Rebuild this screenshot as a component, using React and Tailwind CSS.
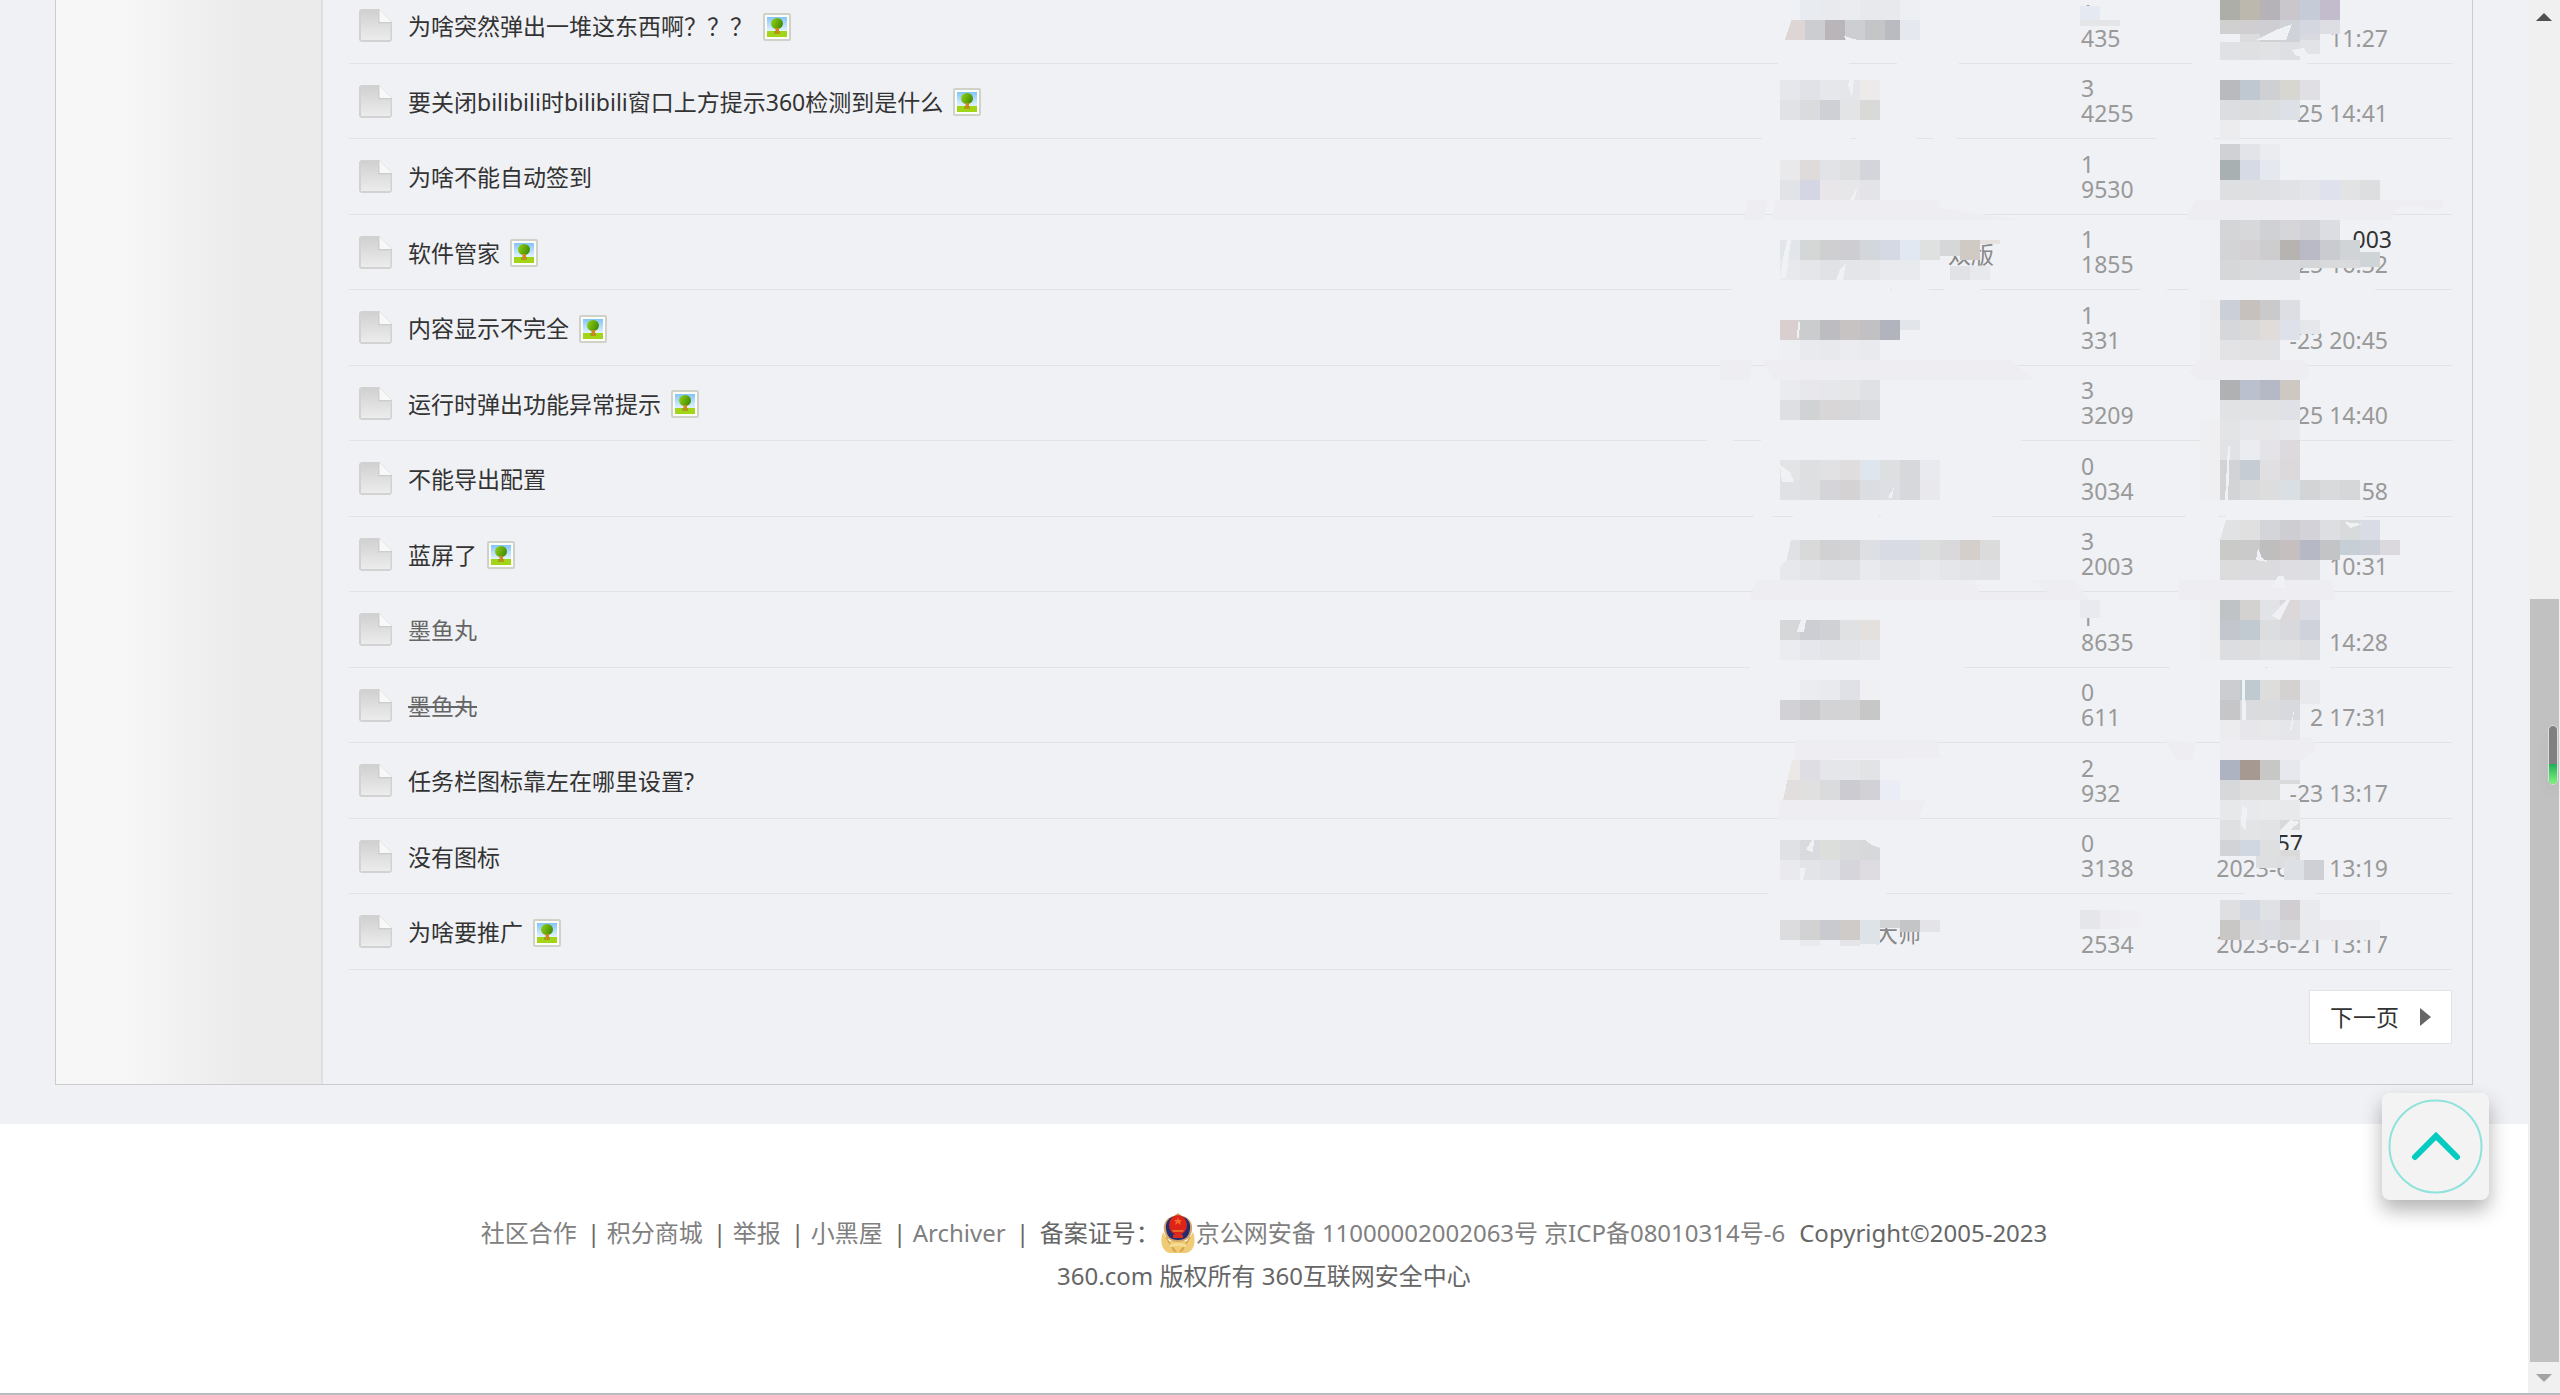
import React from "react";

const THREADS = [
  { title: "为啥突然弹出一堆这东西啊？？？", image: true, replies: "1", views: "435", date: "11:27" },
  { title: "要关闭bilibili时bilibili窗口上方提示360检测到是什么", image: true, replies: "3", views: "4255", date: "25 14:41" },
  { title: "为啥不能自动签到", replies: "1", views: "9530", date: "" },
  { title: "软件管家", image: true, author: "双版", authorWidth: "w-[214px]", replies: "1", views: "1855", name: "003", nameWidth: "w-[174px]", date: "25 16:32" },
  { title: "内容显示不完全", image: true, replies: "1", views: "331", date: "-23 20:45" },
  { title: "运行时弹出功能异常提示", image: true, replies: "3", views: "3209", date: "25 14:40" },
  { title: "不能导出配置", replies: "0", views: "3034", date: "58" },
  { title: "蓝屏了", image: true, replies: "3", views: "2003", date: "10:31" },
  { title: "墨鱼丸", visited: true, replies: "1", views: "8635", date: "14:28" },
  { title: "墨鱼丸", visited: true, struck: true, replies: "0", views: "611", date: "2 17:31" },
  { title: "任务栏图标靠左在哪里设置?", replies: "2", views: "932", date: "-23 13:17" },
  { title: "没有图标", replies: "0", views: "3138", name: "57", nameWidth: "w-[85px]", date: "2023-6-21 13:19" },
  { title: "为啥要推广", image: true, author: "大师", authorWidth: "w-[141px]", replies: "", views: "2534", date: "2023-6-21 13:17" },
];

// pieces of row line that are wiped out: [y, from, to]
const GAPS = [
  [64, 1778, 1849], [64, 1897, 1959], [64, 2192, 2307],
  [139, 1762, 1850], [139, 1856, 1917], [139, 1934, 1957], [139, 2156, 2214],
  [290, 1732, 1890], [290, 1892, 1929], [290, 1945, 1981], [290, 2141, 2167], [290, 2189, 2375],
  [441, 1707, 1733], [441, 1761, 2021],
  [517, 1754, 1773], [517, 1793, 1878], [517, 1881, 1992], [517, 2186, 2218], [517, 2226, 2365],
  [667, 1750, 1965], [667, 2170, 2265], [667, 2268, 2330],
  [894, 1768, 1886], [894, 2245, 2315],
];

// pale smears between the rows
const SMEARS = [
  "1747,200 1768,200 1764,220 1744,220",
  "1776,200 1938,200 1941,208 1968,212 2020,220 1772,220",
  "2195,200 2444,200 2440,209 2428,209 2424,206 2398,206 2392,220 2185,220",
  "1720,360 1753,360 1750,380 1720,380",
  "1763,360 2011,360 2034,380 1772,380",
  "2198,360 2305,360 2310,374 2304,380 2196,380 2190,372",
  "1756,580 1975,580 1979,592 2048,592 2030,580 2074,580 2090,600 1750,600",
  "2178,580 2331,580 2336,600 2178,600",
  "1796,740 1937,740 1940,758 1794,760",
  "2165,740 2196,742 2192,760 2176,760",
  "2220,740 2312,737 2316,750 2300,760 2220,760",
  "1780,800 1926,800 1918,820 1778,820",
];

// mosaic bands: [x, y, height, colours of 20px cells]
const MOSAIC = [
  [1800, 0, 20, "e8ebf0 e9eaee ebecf0 e7e9ed e7e9ed eeeff3"],
  [1785, 20, 20, "ded6d4 cccdd1 b9b5b9 cdced1 c4c5c6 b9bbc1"],
  [1900, 20, 20, "e5e8ee"],
  [1780, 80, 20, "e6e7ea e1e2e8 e6e7eb e5e6ea ecebea"],
  [1780, 100, 20, "e1e2e5 dadbdd cfd0d5 e3e4e5 d9d9d8"],
  [1780, 160, 20, "e9e9ec dfdbdb e2e3e6 dedfe0 d4d5da"],
  [1780, 180, 20, "e2e3e6 d4d6e3 e8e6e8 e7e6e9 e3e3e8"],
  [1780, 240, 20, "e2e5e9 d5d7d6 cfced1 cecdd1 d3d6da d5d9e3 e2e8f2 dfe1e1"],
  [1940, 240, 16, "d6d7d8"],
  [1960, 240, 20, "d0cac4"],
  [1980, 240, 4, "e6e2e0"],
  [1780, 260, 20, "e8e9ec e5e6ea e1e2e6 e4e5e9 e5e6ea e9eaee e9eaee"],
  [1950, 266, 14, "e1e2e6 e8e9ed"],
  [1780, 320, 20, "d9cfcf cacccd bcbcc1 c7c3c2 c1c1c4 b1b4bd"],
  [1900, 320, 10, "e2e5e9"],
  [1780, 340, 20, "eeeff2 e9eaee e8e9ed ebecf0 e9eaee"],
  [1780, 380, 20, "eaebee e8e7ec e6e7ea e5e6e8 dfe1e4"],
  [1780, 400, 20, "dddfe2 d1d2d4 d9d6d8 d7d7da d9dadd"],
  [1780, 460, 20, "e2e4e6 dedfe0 e1e0e2 e0dddf dfe5ec dedfe1 d6d8db e9eaef"],
  [1780, 480, 20, "e0e1e4 dedfe0 d4d4d9 d5d2d4 dcdde0 dddfe4 d7d8dc e9e8ed"],
  [1780, 540, 20, "e0e1e5 d9d9da d1d0d3 d3d3d6 dedfe2 d8dbe4 d8dbe4 dcdddd d9d9db d5cfcb dbdbdb"],
  [1780, 560, 20, "e7e8ec e3e4e8 e0e1e5 e0e1e5 e9eaee e4e5e9 e4e5e8 e8e9ec e5e6ea e2e3e7 e0e2e5"],
  [1780, 620, 20, "d6d7d8 ccced4 d0d1d4 dfe1e3 e3e0de"],
  [1780, 640, 20, "ebecf0 e6e7ec e2e4e8 e2e4e8 e6e7eb"],
  [1800, 680, 20, "ebecf0 e9eaee e0e1e7 f0eff1"],
  [1780, 700, 20, "d1d1d6 cacacc d3d3d5 d3d3d5 c8c7c7"],
  [1780, 760, 20, "ece8e6 dddde3 e4e6ea e4e6ea e2e3e4"],
  [1780, 780, 20, "e2dede e0e0e0 dadbdd cccbd1 d2d2d6 eaedf5"],
  [1780, 840, 20, "dfe1e4 d9dadd dcdedc d9dadb d7d8da"],
  [1780, 860, 20, "e9e9ee e3e4e7 e0e1e6 d5d5db dedce0"],
  [1780, 920, 20, "dcdcde d2d2d2 c9cacf cecbc9"],
  [1860, 920, 24, "dde3e6"],
  [1880, 920, 8, "d2d3d5"],
  [1900, 920, 12, "c4c5c7 e3e3e8"],
  [1800, 940, 6, "e9eaee f0f1f5 e4e5e9"],

  [2080, 0, 4, "f0f1f5"],
  [2080, 6, 14, "e5eaf2"],
  [2080, 20, 6, "e4e6e8 e4e5e7"],
  [2080, 600, 18, "e9eaef"],
  [2080, 910, 19, "e5e6ea edecf0 efeef2"],

  [2200, 300, 60, "eeeef1"],
  [2200, 420, 80, "efeff2"],
  [2200, 600, 60, "efeff2"],
  [2220, 0, 20, "adaea8 bcb8ae b5b3b7 c9c7cc c6ccd7 c3bccc"],
  [2220, 20, 14, "d1d0d1 d0ced0 cfcfd3 d0d2d9 d4d7df dcdee3"],
  [2240, 34, 8, "dcdcdf d0d1d4 d0d2d9 d8dae0"],
  [2220, 42, 18, "e0e1e4 dfe0e2 e1e2e4 dedfe2"],
  [2300, 40, 14, "e2e3e6"],
  [2220, 80, 20, "b9babe bfc7d0 ced0d4 d8d6d1 e0dfe3"],
  [2220, 100, 20, "dcdde0 dbdcde dcdddf dde1e7"],
  [2220, 120, 20, "ecebed"],
  [2220, 144, 16, "cfd1d4 e2e4e9 ebecf0"],
  [2220, 160, 20, "a9b0b1 d5dae4 e5e9ef"],
  [2220, 180, 20, "dedfe0 dedfe1 dfe0e3 e1e2e6 e3e5ea dfe2ec e3e3e4 dcdedf"],
  [2220, 220, 20, "d4d5d7 d7d8da d0d1d4 d6d6d9 d0d2d7 dcdde2"],
  [2220, 240, 20, "d3d4d6 d3d1d4 cdcccf b7b3b1 bab9c6 cacbd0 d0d4d7"],
  [2360, 252, 15, "cfd5d7"],
  [2220, 260, 20, "d6d7d9 d9dadc d9dadd d9dadd"],
  [2300, 260, 8, "d5d6d8 d9dadc d9dadc"],
  [2220, 300, 20, "cbd0d8 c7c1be cacacb dddee3"],
  [2220, 320, 20, "d5d7db dad9da e0dcda dee1ea"],
  [2300, 320, 14, "e5e7eb"],
  [2220, 340, 20, "e3e3e5 e1e1e3 e1e1e3"],
  [2220, 380, 20, "b0b1b3 bac0cd b5b9c5 cdc8c2"],
  [2220, 400, 20, "e1e2e3 e1e2e3 e1e2e3 dfe1e6"],
  [2220, 420, 20, "e2e4e6 e6e7ea e7e7ea e8e9ec"],
  [2220, 440, 20, "e1e2e5 ebecf0 e4e4e8 dcdadd"],
  [2220, 460, 20, "d2d3d6 c5ccd4 e0dfe1 dbd9da"],
  [2220, 480, 20, "d3d4d6 d9dadb dcdddc dadfe4 d3d4d5 d9dadc d5d7d9"],
  [2220, 520, 20, "e1e2e3 e0e0e1 d3d5d9 cecdd2 d2d2d8 dcdee1 d9dadc d9dce4"],
  [2220, 540, 15, "cacbc9 cbcaca bfbebe c6bfc0 b6b8c5 c3c4c6 c7cfd6 cbcfd7 dbd9de"],
  [2220, 555, 5, "cacbc9 cbcaca bfbebe c6bfc0 b6b8c5 c3c4c6"],
  [2220, 560, 20, "dcdcdd dbdbde dbdbdd dedee2 dddee2"],
  [2220, 600, 20, "bfc3c6 d3d2d0 e2e3e6 dcd8da dcdce5"],
  [2220, 620, 20, "c3c6cd c1c9d1 dcdddf d8d8dd cfd2db"],
  [2220, 640, 20, "dcdde0 dddddf e0e1e2 e1e1e4 dddee2"],
  [2220, 680, 20, "cccdd1 bec9d0 dddddc d3d2d0"],
  [2220, 700, 20, "c6c6c8 dadbde dadbdd d7d9de"],
  [2220, 720, 20, "ececee e7e6ea e8e8eb e5e6e9"],
  [2300, 680, 24, "e8e9ed"],
  [2220, 760, 20, "adb3c0 a69992 c7c7c6 e7e8ed"],
  [2220, 780, 20, "d7d8da dcdddc dddddd"],
  [2280, 780, 4, "d9dadc"],
  [2220, 800, 20, "e7e8ea e8e9ec e9eaec e8e9eb"],
  [2220, 820, 20, "dfe0e1 e3e4e5 e2e3e4"],
  [2280, 820, 10, "d9d9da"],
  [2220, 840, 16, "d2d3d6 d0d7e0 dedfe0"],
  [2280, 850, 10, "d9dad9"],
  [2256, 856, 12, "dedfe0 dddee0"],
  [2284, 860, 20, "dde1e5 cfd0d5"],
  [2220, 900, 20, "dfdfe2 d3d8e1 e0e1e4 d0ced1 e9eaee"],
  [2220, 920, 20, "c8c7c5 dbdbde dbdce2 d8d8db e9eaee ebebef ecebef ecedf0"],
];

// background-coloured nicks that break up the cell edges
const NICKS = [
  "1780,0 1798,0 1785,40 1780,40",
  "1844,36 1850,38 1858,40 1846,40",
  "1849,80 1854,80 1852,97 1848,86",
  "1858,186 1854,200 1850,200",
  "1787,240 1791,240 1786,278 1780,278 1783,258",
  "1846,263 1843,280 1836,280 1840,270",
  "1798,322 1800,322 1799,338 1797,338",
  "1780,465 1790,472 1794,482 1782,482",
  "1894,487 1892,498 1888,498",
  "1780,540 1791,540 1787,560 1780,566",
  "1801,620 1806,620 1804,632 1797,632",
  "1780,760 1792,760 1783,800 1780,800",
  "1812,840 1814,840 1813,852 1806,850",
  "1865,840 1880,840 1880,848 1872,845",
  "1800,868 1806,868 1803,880 1800,880",
  "2292,24 2286,40 2256,40 2276,30",
  "2292,50 2304,48 2308,55 2296,56",
  "2228,446 2230,446 2228,500 2225,500",
  "2220,520 2226,520 2220,540",
  "2344,522 2362,524 2350,528",
  "2258,548 2262,558 2268,562 2256,560",
  "2278,576 2284,576 2286,588 2272,588",
  "2286,600 2290,600 2280,620 2272,616",
  "2242,680 2245,680 2246,720 2242,720",
  "2294,710 2292,730 2290,730",
  "2242,805 2247,808 2246,830 2241,826",
  "2290,820 2300,822 2290,830 2281,830",
];

const SITE_LINKS = ["社区合作", "积分商城", "举报", "小黑屋", "Archiver"];

function DocIcon() {
  return (
    <svg className="ml-2.5 size-[33px]" viewBox="0 0 33 33" aria-hidden="true">
      <defs>
        <linearGradient id="doc" x1="0" y1="0" x2="0" y2="1">
          <stop offset="0" stopColor="#d0d0d0" />
          <stop offset="1" stopColor="#ececec" />
        </linearGradient>
      </defs>
      <path d="M2 0H20V13H33V31L31 33H2L0 31V2Z" fill="#d2d2d2" />
      <path d="M2 1H19V14.500H31.500V31H2Z" fill="url(#doc)" />
      <path d="M20 0L33 13H20Z" fill="#f8f8f8" />
      <path d="M20 0L33 13" stroke="#e4e4e4" />
      <path d="M20 0V13.500H33" fill="none" stroke="#cdcdcd" />
    </svg>
  );
}

function ImageIcon() {
  return (
    <svg className="size-7" viewBox="0 0 28 28" aria-hidden="true">
      <defs>
        <linearGradient id="sky" x1="0" y1="0" x2="0" y2="1">
          <stop offset="0" stopColor="#82c4fb" />
          <stop offset="1" stopColor="#e2f3ff" />
        </linearGradient>
        <linearGradient id="crown" x1="0" y1="0.300" x2="1" y2="0.700">
          <stop offset="0" stopColor="#8fce14" />
          <stop offset="1" stopColor="#3f8a00" />
        </linearGradient>
      </defs>
      <rect x="1" y="1" width="26" height="26" rx="1" fill="#fcfcf8" stroke="#d0d2c8" strokeWidth="2" />
      <rect x="4" y="4" width="20" height="14" fill="url(#sky)" />
      <rect x="4" y="18" width="20" height="6" fill="#a2d417" />
      <path d="M11 18h6v3h-6z" fill="#7fb80c" />
      <ellipse cx="14" cy="10.500" rx="6" ry="5.500" fill="url(#crown)" />
      <rect x="12.500" y="15" width="3.500" height="6" fill="#d1851c" />
    </svg>
  );
}

function PoliceBadge() {
  return (
    <svg className="h-10 w-9" viewBox="0 0 36 40" aria-hidden="true">
      <path d="M3 19C-1 30 3 39 10 40H26C33 39 37 30 33 19L28 28H8Z" fill="#eecb74" />
      <path d="M6 24L14 38M30 24L22 38M10 31L16 39M26 31L20 39" stroke="#d9a548" strokeWidth="1.500" />
      <path d="M18 0L22 3C29 4 33 10 32 17C31 24 28 28 18 29C8 28 5 24 4 17C3 10 7 4 14 3Z" fill="#cfa665" />
      <path d="M18 3C27 3 31 9 30 16C29 23 26 27 18 27C10 27 7 23 6 16C5 9 9 3 18 3Z" fill="#262a70" />
      <ellipse cx="18" cy="12" rx="9" ry="10" fill="#de2418" />
      <path d="M18 4l1 3h3l-2 2 1 3-3-2-3 2 1-3-2-2h3z" fill="#f56a2b" />
      <path d="M12 17h12l-1 2H13z" fill="#e8692a" />
      <path d="M13 22l5-2 5 2v3H13z" fill="#d92b20" />
      <path d="M10 33c5-2 11-2 16 0" fill="none" stroke="#f6dd96" strokeWidth="3" />
    </svg>
  );
}

function Mosaic() {
  return (
    <svg
      className="pointer-events-none absolute top-0 right-3 h-[980px] w-[760px]"
      viewBox="1700 0 760 980"
      shapeRendering="crispEdges"
      aria-hidden="true"
    >
      {GAPS.map(([y, from, to]) => (
        <rect key={`${y}-${from}`} x={from} y={y - 2} width={to - from} height="4" fill="#f0f1f5" />
      ))}
      {SMEARS.map((points) => (
        <polygon key={points} points={points} fill="#eeedf2" />
      ))}
      {MOSAIC.map(([x, y, height, colours]) =>
        colours.split(" ").map((colour, i) => (
          <rect key={`${x}-${y}-${i}`} x={x + i * 20} y={y} width="20" height={height} fill={`#${colour}`} />
        ))
      )}
      {NICKS.map((points) => (
        <polygon key={points} points={points} fill="#f0f1f5" />
      ))}
    </svg>
  );
}

function ThreadRow({ thread }) {
  return (
    <tr className="odd:h-[76px] even:h-[75px]">
      <td className="border-b border-[#e2e3e5] p-0">
        <DocIcon />
      </td>
      <td className="border-b border-[#e2e3e5] p-0">
        <div className="flex items-center gap-2.5 pt-0.5">
          <a
            href="#"
            className={`${thread.visited ? "text-[#666]" : "text-[#333]"} ${
              thread.struck ? "line-through decoration-2" : ""
            }`}
          >
            {thread.title}
          </a>
          {thread.image && <ImageIcon />}
        </div>
      </td>
      <td className="border-b border-[#e2e3e5] p-0 text-[#888]">
        {thread.author && (
          <a href="#" className={`block pt-1 text-right ${thread.authorWidth}`}>
            {thread.author}
          </a>
        )}
      </td>
      <td className="border-b border-[#e2e3e5] p-0 text-[#999]">
        <div className="h-[25px]">{thread.replies}</div>
        <div className="h-[25px]">{thread.views}</div>
      </td>
      <td className="border-b border-[#e2e3e5] p-0 text-[#999]">
        <div className="h-[25px]">
          {thread.name && (
            <a href="#" className={`block text-right text-[#333] ${thread.nameWidth}`}>
              {thread.name}
            </a>
          )}
        </div>
        <div className="flex h-[25px] w-[170px] justify-end whitespace-nowrap">{thread.date}</div>
      </td>
    </tr>
  );
}

function Scrollbar() {
  return (
    <div className="fixed top-0 right-0 bottom-0.5 flex w-8 flex-col items-center bg-[#f0f0f0]">
      <div className="flex h-[34px] items-center">
        <svg className="h-2 w-4" viewBox="0 0 16 8" aria-hidden="true">
          <path d="M8 0L16 8H0Z" fill="#505050" />
        </svg>
      </div>
      <div className="grow-[565]" />
      <div className="w-[29px] grow-[763] bg-[#c1c1c1]" />
      <div className="flex h-[31px] items-center">
        <svg className="h-2 w-4" viewBox="0 0 16 8" aria-hidden="true">
          <path d="M8 8L0 0H16Z" fill="#a3a3a3" />
        </svg>
      </div>
      <div className="absolute top-[725px] right-0.5 flex h-[60px] w-2.5 flex-col overflow-hidden rounded-full border border-[#ddd] bg-[#808080] shadow-lg">
        <div className="mt-auto h-5 bg-gradient-to-b from-[#18b058] to-[#7df57d]" />
      </div>
    </div>
  );
}

function App() {
  return (
    <div className="flex min-h-screen flex-col overflow-hidden border-b-2 border-[#b8bbc0] bg-white pr-8 font-['Noto_Sans','Noto_Sans_CJK_SC',sans-serif] text-[23px] leading-[25px] text-[#333]">
      <main className="bg-[#f0f1f5] px-[55px] pb-[39px]">
        <div className="relative flex border border-t-0 border-[#ccc]">
          <aside className="w-[267px] shrink-0 border-r-2 border-[#dfdfe0] bg-linear-to-r from-[#f7f7f7] from-25% to-[#ebebeb] to-70%" />
          <section className="min-w-0 flex-1 pr-5 pb-10 pl-[26px]">
            <table className="-mt-3 w-full table-fixed border-separate border-spacing-0">
              <colgroup>
                <col className="w-[59px]" />
                <col />
                <col className="w-[301px]" />
                <col className="w-[137px]" />
                <col className="w-[234px]" />
              </colgroup>
              <tbody>
                {THREADS.map((thread, idx) => (
                  <ThreadRow key={idx} thread={thread} />
                ))}
              </tbody>
            </table>
            <div className="mt-5 flex justify-end">
              <button className="flex h-[54px] w-[143px] items-center justify-between border border-[#e2e3e5] bg-white px-5">
                下一页
                <svg className="h-[18px] w-[11px]" viewBox="0 0 11 18" aria-hidden="true">
                  <path d="M0 0L11 9L0 18Z" fill="#666" />
                </svg>
              </button>
            </div>
          </section>
          <Mosaic />
        </div>
      </main>

      <footer className="flex flex-1 flex-col items-center pt-[87px] pb-[94px] text-2xl leading-[43px] text-[#666]">
        <div className="flex h-[43px] items-center whitespace-nowrap">
          {SITE_LINKS.map((label) => (
            <React.Fragment key={label}>
              <a href="#" className="text-[#808080]">
                {label}
              </a>
              <span className="w-[30px] pl-1 text-center">|</span>
            </React.Fragment>
          ))}
          <span className="ml-1">备案证号：</span>
          <a href="#" className="flex items-center text-[#808080]">
            <PoliceBadge />
            京公网安备 11000002002063号
          </a>
          <a href="#" className="ml-1.5 text-[#808080]">
            京ICP备08010314号-6
          </a>
          <span className="ml-3.5">Copyright©2005-2023</span>
        </div>
        <p>360.com 版权所有 360互联网安全中心</p>
      </footer>

      <button
        aria-label="返回顶部"
        className="fixed right-[71px] bottom-[195px] flex size-[107px] items-center justify-center rounded-lg bg-[#f3f3f3] shadow-[0_10px_20px_rgba(0,0,0,0.3)]"
      >
        <svg className="size-[95px]" viewBox="0 0 95 95" fill="none" aria-hidden="true">
          <circle cx="47.500" cy="47.500" r="46" stroke="#8fe3dc" strokeWidth="2" />
          <path d="M27 58L48 37L69 58" stroke="#06cbc1" strokeWidth="6" strokeLinecap="round" />
        </svg>
      </button>
      <Scrollbar />
    </div>
  );
}

export default App;
